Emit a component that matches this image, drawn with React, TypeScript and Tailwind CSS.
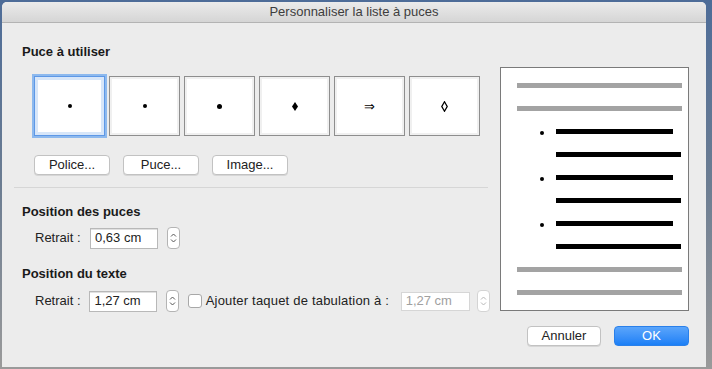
import React from "react";

const font = { fontFamily: '"Liberation Sans", Arial, sans-serif' };

function Stepper({ disabled = false }: { disabled?: boolean }) {
  return (
    <div
      className={`w-[13px] h-[22px] rounded-[4px] border bg-white flex items-center justify-center ${
        disabled ? "border-[#d4d4d4]" : "border-[#b4b4b4]"
      }`}
    >
      <svg width="7" height="12" viewBox="0 0 7 12">
        <path
          d="M1 4.5 L3.5 2 L6 4.5 M1 7.5 L3.5 10 L6 7.5"
          fill="none"
          stroke={disabled ? "#b8b8b8" : "#555"}
          strokeWidth="1"
        />
      </svg>
    </div>
  );
}

function BulletBox({ children, selected = false }: { children: React.ReactNode; selected?: boolean }) {
  return (
    <div
      className={`w-[71px] h-[60px] bg-white flex items-center justify-center border ${
        selected
          ? "border-[#5e98e6] shadow-[0_0_0_2px_#8db9ee,inset_0_0_0_3px_#d7e6f9]"
          : "border-[#8e8e8e] shadow-[inset_0_0_0_2px_#f0f0f0]"
      }`}
    >
      {children}
    </div>
  );
}

function Btn({ label, w }: { label: string; w: string }) {
  return (
    <div
      className={`${w} h-[20px] rounded-[4px] bg-white border border-[#c2c2c2] shadow-[0_1px_0_#d6d6d6] flex items-center justify-center text-[13px] text-[#222]`}
    >
      {label}
    </div>
  );
}

function Dot() {
  return <div className="w-[4px] h-[4px] rounded-full bg-black" />;
}

export default function App() {
  const gray = "h-[5px] bg-[#a3a3a3] w-[165px] ml-[16px]";
  return (
    <div
      className="w-[712px] h-[369px] bg-gradient-to-b from-[#4d6c98] via-[#6c7d92] to-[#9a9a9a] overflow-hidden"
      style={font}
    >
      <div className="ml-[2px] mt-[2px] w-[704px] h-[365px] bg-[#ececec] rounded-t-[5px] overflow-hidden flex flex-col">
        {/* title bar */}
        <div className="h-[21px] bg-gradient-to-b from-[#ebebeb] to-[#d5d5d5] border-b border-[#b3b3b3] flex items-center justify-center text-[13px] text-[#3d3d3d]">
          Personnaliser la liste à puces
        </div>
        {/* body */}
        <div className="flex flex-row">
          {/* left column */}
          <div className="w-[488px] pl-[12px] pt-[21px] flex flex-col">
            <div className="ml-[8px] h-[16px] leading-[16px] text-[13px] font-bold text-[#1a1a1a]">
              Puce à utiliser
            </div>
            <div className="ml-[20px] mt-[16px] flex gap-[4px]">
              <BulletBox selected>
                <div className="w-[4px] h-[4px] rounded-full bg-black" />
              </BulletBox>
              <BulletBox>
                <div className="w-[4px] h-[4px] rounded-full bg-black" />
              </BulletBox>
              <BulletBox>
                <div className="w-[5px] h-[5px] rounded-full bg-black" />
              </BulletBox>
              <BulletBox>
                <svg width="6" height="9" viewBox="0 0 6 9">
                  <path d="M3 0 L6 4.5 L3 9 L0 4.5 Z" fill="#000" />
                </svg>
              </BulletBox>
              <BulletBox>
                <span className="text-[13px] leading-none text-black" style={{ fontFamily: '"DejaVu Sans", sans-serif' }}>
                  ⇒
                </span>
              </BulletBox>
              <BulletBox>
                <svg width="7" height="11" viewBox="0 0 7 11">
                  <path d="M3.5 0.8 L6.2 5.5 L3.5 10.2 L0.8 5.5 Z" fill="none" stroke="#000" strokeWidth="1.3" />
                </svg>
              </BulletBox>
            </div>
            <div className="ml-[20px] mt-[19px] flex gap-[13px]">
              <Btn label="Police..." w="w-[76px]" />
              <Btn label="Puce..." w="w-[76px]" />
              <Btn label="Image..." w="w-[76px]" />
            </div>
            <div className="mt-[12px] h-px bg-[#d6d6d6] w-[474px]" />
            <div className="ml-[8px] mt-[16px] h-[16px] leading-[16px] text-[13px] font-bold text-[#1a1a1a]">
              Position des puces
            </div>
            <div className="ml-[21px] mt-[7px] flex items-center h-[22px]">
              <span className="w-[55px] text-[13px] text-[#222]">Retrait :</span>
              <div className="w-[68px] h-[21px] bg-white border border-[#b8b8b8] shadow-[inset_0_1px_0_#e0e0e0] flex items-center pl-[4px] text-[13px] text-[#222]">
                0,63 cm
              </div>
              <div className="ml-[9px]">
                <Stepper />
              </div>
            </div>
            <div className="ml-[8px] mt-[17px] h-[16px] leading-[16px] text-[13px] font-bold text-[#1a1a1a]">
              Position du texte
            </div>
            <div className="ml-[21px] mt-[8px] flex items-center h-[22px]">
              <span className="w-[55px] text-[13px] text-[#222]">Retrait :</span>
              <div className="w-[68px] h-[21px] bg-white border border-[#b8b8b8] shadow-[inset_0_1px_0_#e0e0e0] flex items-center pl-[4px] text-[13px] text-[#222]">
                1,27 cm
              </div>
              <div className="ml-[9px]">
                <Stepper />
              </div>
              <div className="ml-[9px] w-[14px] h-[14px] bg-white border border-[#a8a8a8] rounded-[3px]" />
              <span className="ml-[4px] text-[13px] text-[#222] w-[197px] tracking-[0.2px]">Ajouter taquet de tabulation à :</span>
              <div className="w-[70px] h-[19px] bg-white border border-[#d6d6d6] flex items-center pl-[4px] text-[13px] text-[#a0a0a0]">
                1,27 cm
              </div>
              <div className="ml-[7px]">
                <Stepper disabled />
              </div>
            </div>
          </div>
          {/* right column */}
          <div className="ml-[10px] pt-[44px] flex flex-col">
            <div className="w-[189px] h-[244px] bg-white border border-[#7a7a7a] pt-[15px] flex flex-col gap-[18px]">
              <div className={gray} />
              <div className={gray} />
              {[0, 1, 2].map((i) => (
                <React.Fragment key={i}>
                  <div className="relative h-[5px]">
                    <div className="absolute left-[39px] top-[2px]">
                      <Dot />
                    </div>
                    <div className="ml-[55px] w-[117px] h-[5px] bg-black" />
                  </div>
                  <div className="ml-[55px] w-[125px] h-[5px] bg-black" />
                </React.Fragment>
              ))}
              <div className={gray} />
              <div className={gray} />
            </div>
            <div className="mt-[15px] flex justify-end gap-[13px] w-[189px]">
              <Btn label="Annuler" w="w-[74px]" />
              <div className="w-[75px] h-[20px] rounded-[4px] bg-gradient-to-b from-[#5aa5fb] to-[#1a7ff6] border border-[#2a80ea] flex items-center justify-center text-[13px] text-white">
                OK
              </div>
            </div>
          </div>
        </div>
      </div>
    </div>
  );
}
